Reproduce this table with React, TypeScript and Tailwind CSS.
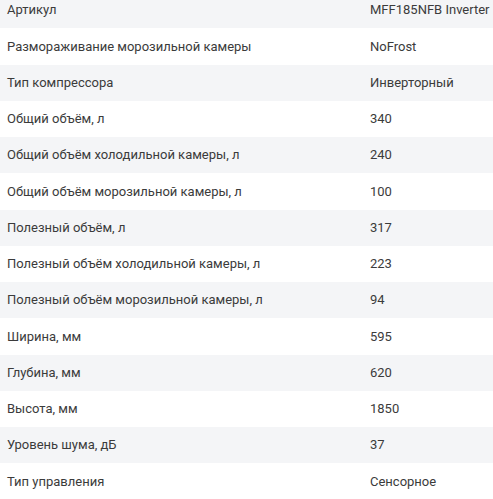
import React from "react";

const rows: [string, string][] = [
  ["Артикул", "MFF185NFB Inverter"],
  ["Размораживание морозильной камеры", "NoFrost"],
  ["Тип компрессора", "Инверторный"],
  ["Общий объём, л", "340"],
  ["Общий объём холодильной камеры, л", "240"],
  ["Общий объём морозильной камеры, л", "100"],
  ["Полезный объём, л", "317"],
  ["Полезный объём холодильной камеры, л", "223"],
  ["Полезный объём морозильной камеры, л", "94"],
  ["Ширина, мм", "595"],
  ["Глубина, мм", "620"],
  ["Высота, мм", "1850"],
  ["Уровень шума, дБ", "37"],
  ["Тип управления", "Сенсорное"],
];

export default function App() {
  return (
    <div className="w-[493px] h-[499px] overflow-hidden bg-white">
      <div
        className="-mt-[8px] flex flex-col text-[13px] text-[#3b3b3b]"
        style={{ fontFamily: "Roboto, 'Noto Sans', sans-serif" }}
      >
        {rows.map(([k, v], i) => (
          <div
            key={k}
            className={`grid grid-cols-[363px_1fr] items-center h-[36.25px] px-[7px] whitespace-nowrap ${
              i % 2 === 0 ? "bg-[#f4f5f7]" : "bg-white"
            }`}
          >
            <span>{k}</span>
            <span>{v}</span>
          </div>
        ))}
      </div>
    </div>
  );
}
